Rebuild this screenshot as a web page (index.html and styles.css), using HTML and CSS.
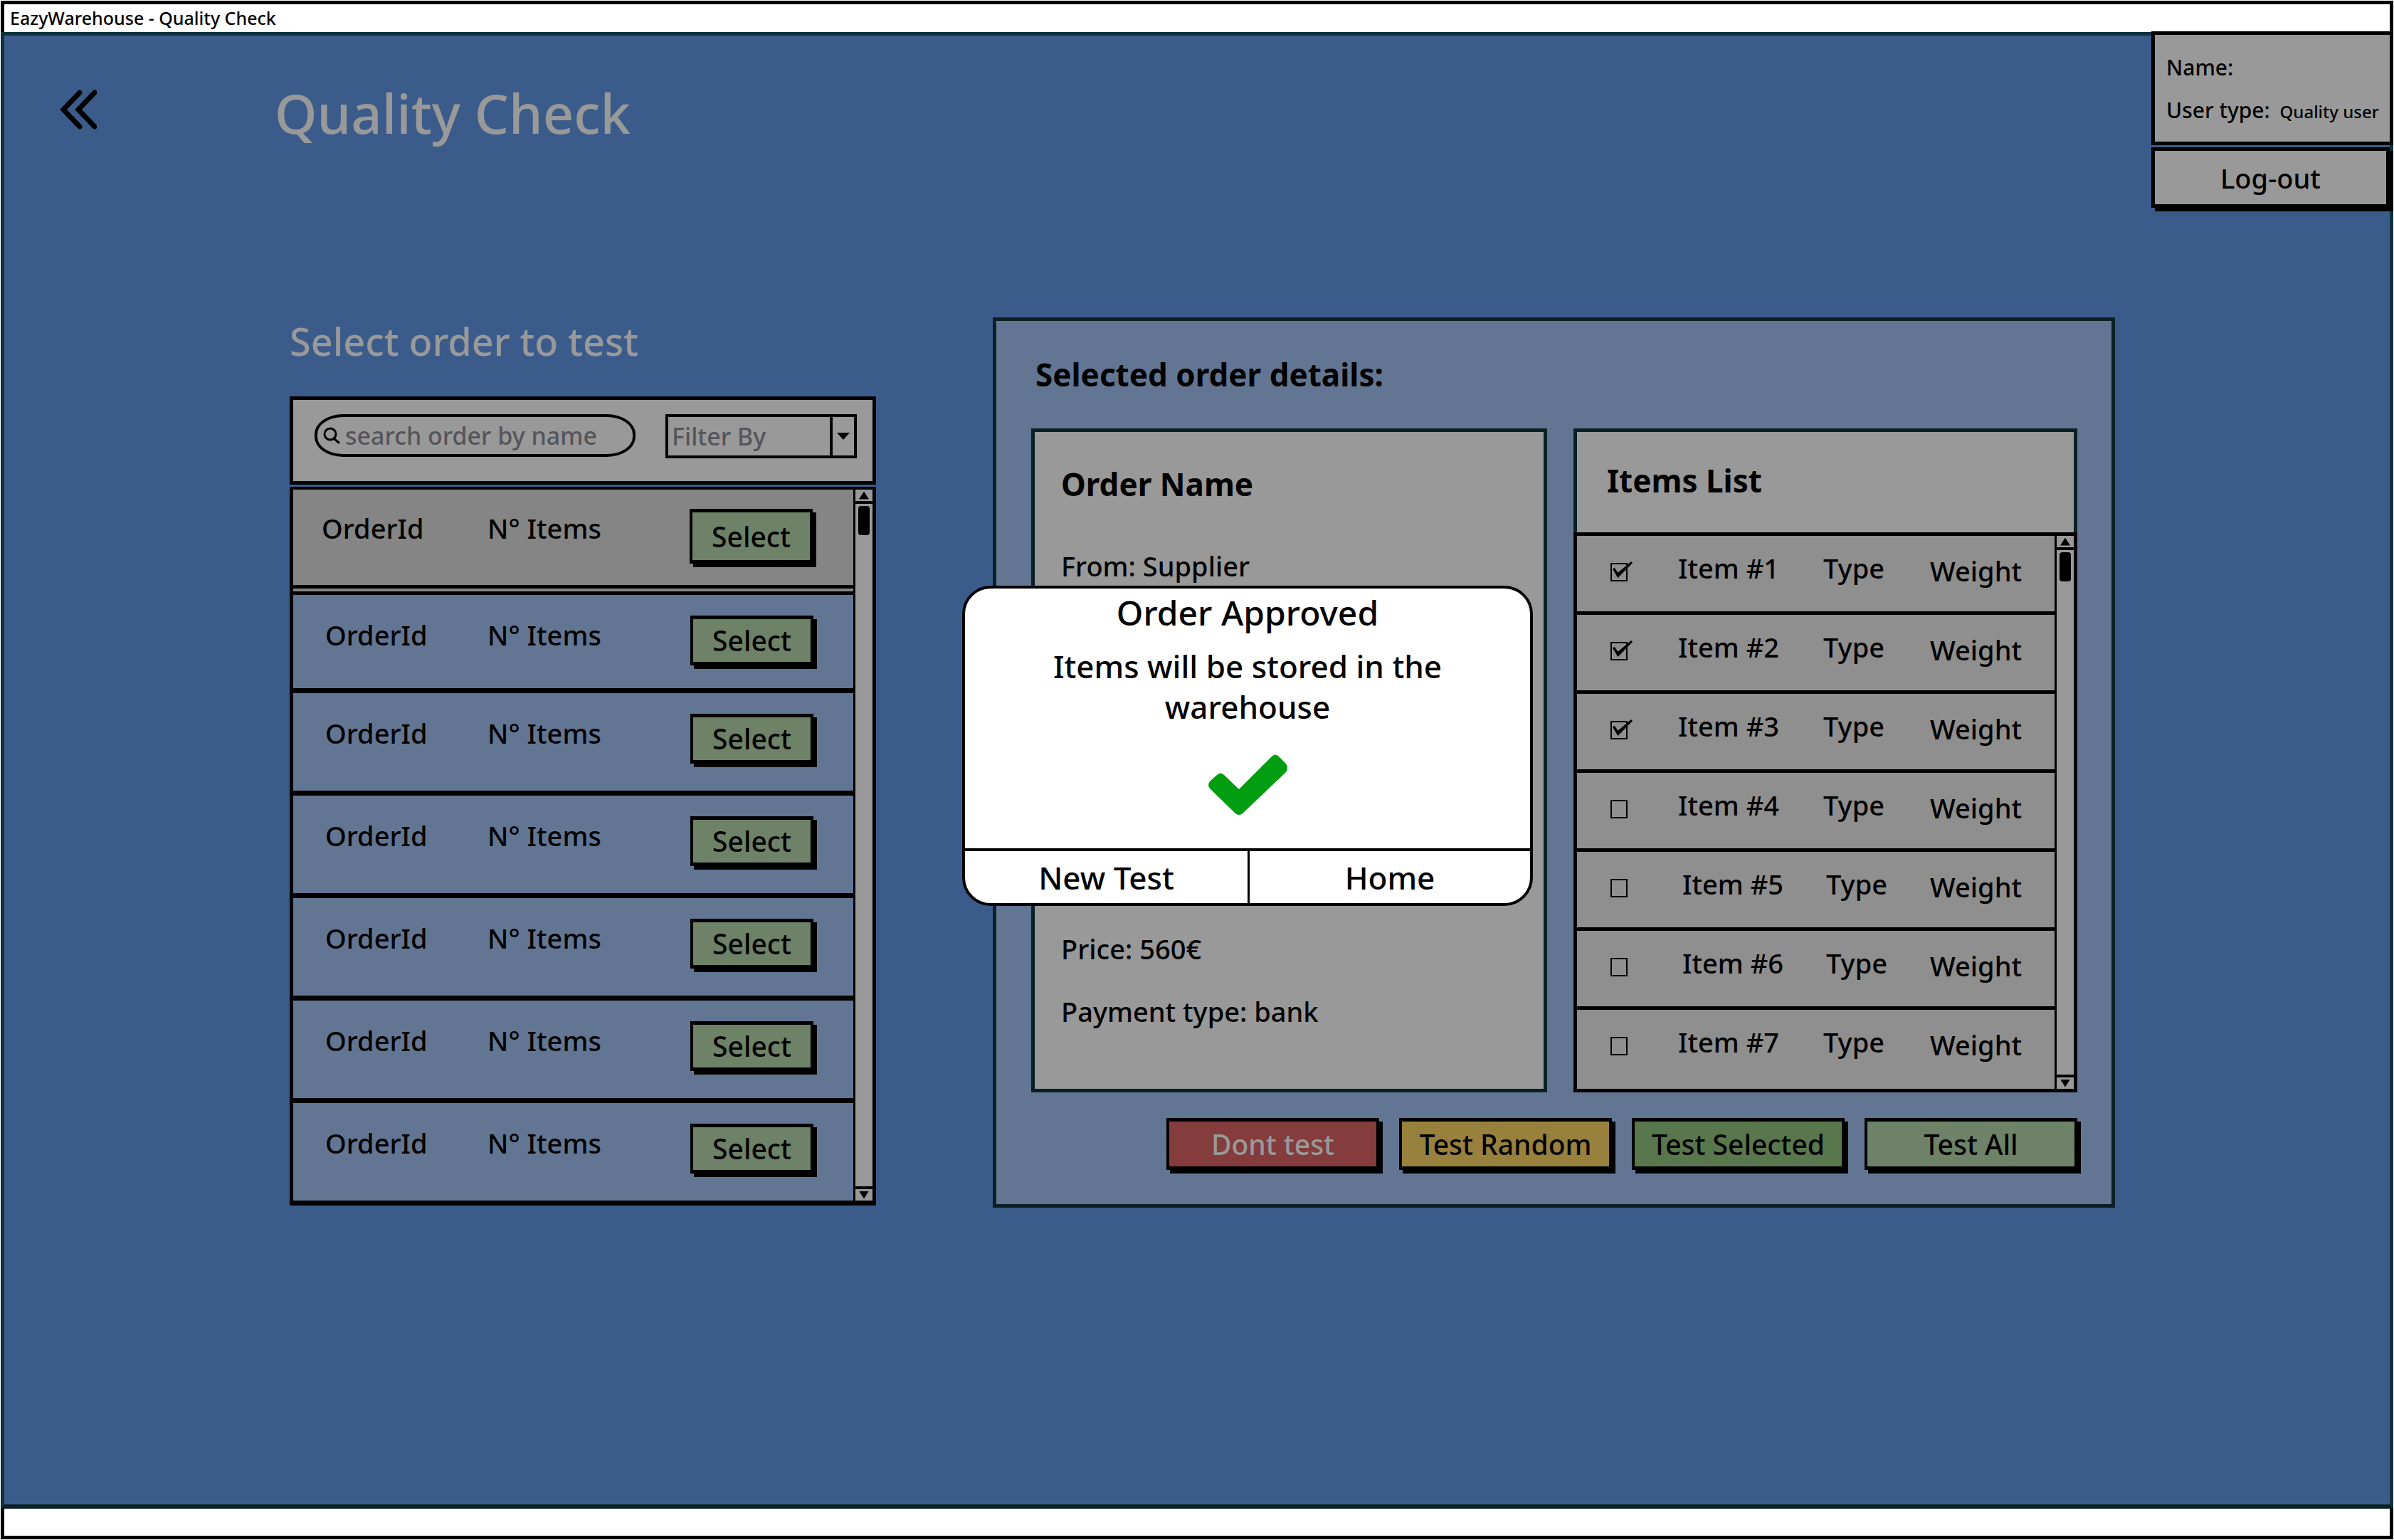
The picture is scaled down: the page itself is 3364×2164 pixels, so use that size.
FILE: index.html
```html
<!DOCTYPE html>
<html lang="en">
<head>
<meta charset="utf-8">
<title>EazyWarehouse - Quality Check</title>
<link rel="stylesheet" href="styles.css">
</head>
<body>
<div class="window">
  <div class="titlebar">EazyWarehouse - Quality Check</div>

  <div class="screen">
    <header class="page-header">
      <a class="back" href="#" aria-label="Back">
        <svg class="back-icon" viewBox="0 0 52 56" aria-hidden="true">
          <path d="M28 4 L5 28 L28 52 M49 4 L26 28 L49 52"/>
        </svg>
      </a>
      <h1 class="page-title">Quality Check</h1>
      <div class="account">
        <div class="account-card">
          <p class="account-line">Name:</p>
          <p class="account-line">User type: <span class="account-value">Quality user</span></p>
        </div>
        <button class="logout" type="button">Log-out</button>
      </div>
    </header>

    <main class="workspace">
      <section class="orders">
        <h2 class="orders-title">Select order to test</h2>
        <div class="orders-tools">
          <label class="search">
            <svg class="search-icon" viewBox="0 0 24 24" aria-hidden="true">
              <circle cx="10" cy="10" r="8"/>
              <path d="M15 16 L22 22"/>
            </svg>
            <input class="search-input" type="search" placeholder="search order by name" aria-label="search order by name">
          </label>
          <div class="filter">
            <select class="filter-select" aria-label="Filter By">
              <option>Filter By</option>
            </select>
            <span class="filter-arrow"></span>
          </div>
        </div>
        <div class="orders-list">
          <table class="orders-table">
            <tbody>
              <tr class="order order-selected"><td>OrderId</td><td>N° Items</td><td><button class="btn btn-select" type="button">Select</button></td></tr>
              <tr class="order"><td>OrderId</td><td>N° Items</td><td><button class="btn btn-select" type="button">Select</button></td></tr>
              <tr class="order"><td>OrderId</td><td>N° Items</td><td><button class="btn btn-select" type="button">Select</button></td></tr>
              <tr class="order"><td>OrderId</td><td>N° Items</td><td><button class="btn btn-select" type="button">Select</button></td></tr>
              <tr class="order"><td>OrderId</td><td>N° Items</td><td><button class="btn btn-select" type="button">Select</button></td></tr>
              <tr class="order"><td>OrderId</td><td>N° Items</td><td><button class="btn btn-select" type="button">Select</button></td></tr>
              <tr class="order"><td>OrderId</td><td>N° Items</td><td><button class="btn btn-select" type="button">Select</button></td></tr>
            </tbody>
          </table>
          <div class="scrollbar" aria-hidden="true">
            <span class="scroll-end scroll-up"></span>
            <span class="scroll-track"><span class="scroll-thumb"></span></span>
            <span class="scroll-end scroll-down"></span>
          </div>
        </div>
      </section>

      <section class="details">
        <h2 class="details-title">Selected order details:</h2>
        <div class="details-cards">
          <article class="order-card">
            <h3 class="card-title">Order Name</h3>
            <p class="order-line order-from">From: Supplier</p>
            <p class="order-line">Price: 560€</p>
            <p class="order-line">Payment type: bank</p>
          </article>
          <article class="items-card">
            <div class="items-head"><h3 class="card-title">Items List</h3></div>
            <div class="items-list">
              <table class="items-table">
                <tbody>
                  <tr class="item"><td class="item-low"><input class="check" type="checkbox" aria-label="Item #1" checked></td><td>Item #1</td><td>Type</td><td class="item-low">Weight</td></tr>
                  <tr class="item"><td class="item-low"><input class="check" type="checkbox" aria-label="Item #2" checked></td><td>Item #2</td><td>Type</td><td class="item-low">Weight</td></tr>
                  <tr class="item"><td class="item-low"><input class="check" type="checkbox" aria-label="Item #3" checked></td><td>Item #3</td><td>Type</td><td class="item-low">Weight</td></tr>
                  <tr class="item"><td class="item-low"><input class="check" type="checkbox" aria-label="Item #4"></td><td>Item #4</td><td>Type</td><td class="item-low">Weight</td></tr>
                  <tr class="item item-inset"><td class="item-low"><input class="check" type="checkbox" aria-label="Item #5"></td><td>Item #5</td><td>Type</td><td class="item-low">Weight</td></tr>
                  <tr class="item item-inset"><td class="item-low"><input class="check" type="checkbox" aria-label="Item #6"></td><td>Item #6</td><td>Type</td><td class="item-low">Weight</td></tr>
                  <tr class="item"><td class="item-low"><input class="check" type="checkbox" aria-label="Item #7"></td><td>Item #7</td><td>Type</td><td class="item-low">Weight</td></tr>
                </tbody>
              </table>
              <div class="scrollbar" aria-hidden="true">
                <span class="scroll-end scroll-up"></span>
                <span class="scroll-track"><span class="scroll-thumb"></span></span>
                <span class="scroll-end scroll-down"></span>
              </div>
            </div>
          </article>
        </div>
        <div class="actions">
          <button class="btn btn-action btn-red" type="button">Dont test</button>
          <button class="btn btn-action btn-yellow" type="button">Test Random</button>
          <button class="btn btn-action btn-green" type="button">Test Selected</button>
          <button class="btn btn-action" type="button">Test All</button>
        </div>
      </section>
    </main>
  </div>

  <div class="statusbar"></div>
</div>

<div class="overlay">
  <div class="dialog" role="dialog" aria-labelledby="dialog-title">
    <h2 class="dialog-title" id="dialog-title">Order Approved</h2>
    <p class="dialog-text">Items will be stored in the warehouse</p>
    <svg class="dialog-icon" viewBox="0 0 111 85" aria-hidden="true">
      <path d="M3 37 L12 29 Q17 24 22 29 L43 49 L89 3 Q94 -2 99 3 L108 12 Q114 19 108 26 L48 83 Q43 87 38 83 L3 49 Q-3 43 3 37 Z"/>
    </svg>
    <div class="dialog-actions">
      <button class="dialog-button" type="button">New Test</button>
      <button class="dialog-button" type="button">Home</button>
    </div>
  </div>
</div>
</body>
</html>
```
FILE: styles.css
```css
:root {
  --ink: #000;
  --teal: #0a2025;
  --frame: #0d323c;
  --blue: #3b5c8b;
  --panel: #627694;
  --grey: #999;
  --row: #8f8f8f;
  --row-selected: #858585;
  --sage: #6d8266;
}

* {
  box-sizing: border-box;
}

body {
  margin: 0;
  padding: 1px;
  background: #fff;
  color: var(--ink);
  font-family: "Noto Sans", "Open Sans", sans-serif;
  font-size: 38px;
  font-weight: 500;
  line-height: 50px;
  position: relative;
}

h1, h2, h3, p {
  margin: 0;
  font-weight: 500;
}

button, input, select {
  margin: 0;
  padding: 0;
  border-radius: 0;
  color: inherit;
  font: inherit;
}

button {
  cursor: pointer;
}

/* Window frame */

.window {
  display: flex;
  flex-direction: column;
  min-height: calc(100vh - 2px);
}

.titlebar {
  padding: 0 8px;
  border: 5px solid var(--ink);
  border-bottom: 0;
  font-size: 25px;
  line-height: 39px;
}

.screen {
  flex: 1;
  border: 5px solid var(--frame);
  border-bottom: 6px solid var(--teal);
  background: var(--blue);
}

.statusbar {
  height: 43px;
  border: 5px solid var(--ink);
  border-top: 0;
}

/* Header */

.page-header {
  display: flex;
  align-items: flex-start;
}

.back {
  margin: 76px 0 0 78px;
}

.back-icon {
  display: block;
  width: 52px;
  height: 56px;
  fill: none;
  stroke: var(--ink);
  stroke-width: 7;
  stroke-linecap: round;
}

.page-title {
  margin: 59px auto 0 250px;
  color: var(--grey);
  font-size: 76px;
  line-height: 100px;
}

.account {
  width: 340px;
  margin: -6px -5px 0 0;
}

.account-card {
  height: 160px;
  padding: 16px 0 0 16px;
  border: 5px solid var(--ink);
  background: var(--grey);
}

.account-line {
  height: 60px;
  font-size: 30px;
  line-height: 60px;
  white-space: nowrap;
}

.account-value {
  margin-left: 6px;
  font-size: 24px;
}

.logout {
  display: block;
  width: 335px;
  height: 85px;
  margin-top: 3px;
  border: 5px solid var(--ink);
  background: var(--grey);
  box-shadow: 5px 5px 0 var(--ink);
}

/* Two-column work area */

.workspace {
  display: grid;
  grid-template-columns: 401fr 824fr 164fr 1577fr 386fr;
  align-items: start;
  margin-top: 154px;
}

.orders {
  grid-column: 2;
}

.orders-title {
  margin-bottom: 45px;
  color: var(--grey);
  font-size: 54px;
  line-height: 66px;
}

.orders-tools {
  display: flex;
  justify-content: space-between;
  margin-bottom: 3px;
  padding: 20px 22px 32px 30px;
  border: 5px solid var(--ink);
  background: var(--grey);
}

.search {
  display: flex;
  align-items: center;
  width: 451px;
  height: 60px;
  padding: 0 20px 0 8px;
  border: 4px solid var(--ink);
  border-radius: 40px / 28px;
}

.search-icon {
  flex: none;
  width: 24px;
  height: 24px;
  fill: none;
  stroke: var(--ink);
  stroke-width: 3;
  stroke-linecap: round;
}

.search-input {
  flex: 1;
  min-width: 0;
  margin-left: 7px;
  border: 0;
  background: none;
  font-size: 34px;
  line-height: 50px;
  outline: 0;
  appearance: none;
}

.search-input::placeholder {
  color: #55555c;
  opacity: 1;
}

.filter {
  display: flex;
  width: 269px;
  height: 62px;
  border: 4px solid var(--ink);
}

.filter-select {
  flex: 1;
  padding-left: 5px;
  border: 0;
  background: none;
  color: #55555c;
  font-size: 34px;
  appearance: none;
}

.filter-arrow {
  display: grid;
  place-items: center;
  width: 34px;
  border-left: 4px solid var(--ink);
}

.filter-arrow::after {
  content: "";
  width: 18px;
  height: 10px;
  background: var(--ink);
  clip-path: polygon(0 0, 100% 0, 50% 100%);
}

.orders-list {
  display: flex;
  border: 5px solid var(--ink);
  border-width: 4px 5px 7px;
  background: var(--panel);
}

.orders-table, .items-table {
  display: block;
  flex: 1;
}

.orders-table tbody, .items-table tbody {
  display: block;
}

td {
  padding: 0;
}

.order {
  display: grid;
  grid-template-columns: 228px 285px 1fr;
  align-items: start;
  height: 144px;
  padding: 29px 0 0 45px;
  border-bottom: 7px solid var(--ink);
  line-height: 54px;
}

.order:last-child {
  height: 137px;
  border-bottom: 0;
}

.order-selected {
  grid-template-columns: 233px 284px 1fr;
  height: 148px;
  padding: 27px 0 0 40px;
  border-bottom: 14px double var(--ink);
  background: var(--row-selected);
}

.order-selected + .order {
  height: 138px;
}

/* Buttons with a hard shadow */

.btn {
  display: block;
  border: 5px solid var(--ink);
  border-width: 5px 4px;
  background: var(--sage);
  box-shadow: 5px 5px 0 var(--ink);
  font-size: 39px;
}

.btn-select {
  width: 173px;
  height: 70px;
  line-height: 54px;
}

.order-selected .btn-select {
  height: 77px;
}

/* Scrollbar */

.scrollbar {
  display: flex;
  flex-direction: column;
  flex: none;
  width: 27px;
  border-left: 3px solid var(--ink);
  background: var(--grey);
}

.scroll-end {
  display: grid;
  place-items: center;
  height: 16px;
}

.scroll-end::after {
  content: "";
  width: 14px;
  height: 11px;
  background: var(--ink);
}

.scroll-up::after {
  clip-path: polygon(50% 0, 100% 100%, 0 100%);
}

.scroll-down::after {
  clip-path: polygon(0 0, 100% 0, 50% 100%);
}

.scroll-track {
  display: flex;
  flex: 1;
  justify-content: center;
  padding-top: 3px;
  border: solid var(--ink);
  border-width: 4px 0;
}

.scroll-thumb {
  width: 16px;
  height: 41px;
  border-radius: 4px;
  background: var(--ink);
}

/* Selected order */

.details {
  grid-column: 4;
  padding: 45px 48px 48px 49px;
  border: 5px solid var(--teal);
  background: var(--panel);
}

.details-title {
  margin-bottom: 46px;
  padding-left: 6px;
  font-size: 44px;
  font-weight: 700;
  line-height: 60px;
}

.details-cards {
  display: grid;
  grid-template-columns: 725fr 708fr;
  gap: 37px;
}

.card-title {
  font-size: 44px;
  font-weight: 700;
  line-height: 60px;
}

.order-card {
  padding: 43px 37px;
  border: 5px solid var(--teal);
  background: var(--grey);
}

.order-line {
  margin-top: 38px;
}

.order-from {
  margin: 60px 0 488px;
}

.items-head {
  height: 146px;
  padding: 38px 42px 0;
  border: 5px solid var(--teal);
  border-bottom: 0;
  background: var(--grey);
}

.items-list {
  display: flex;
  border: 5px solid var(--ink);
  background: var(--row);
}

.item {
  display: grid;
  grid-template-columns: 95px 204px 150px 1fr;
  align-items: start;
  height: 111px;
  padding: 20px 0 0 47px;
  border-bottom: 5px solid var(--ink);
}

.item:last-child {
  border-bottom: 0;
}

.item-inset {
  grid-template-columns: 101px 202px 146px 1fr;
}

.item-low {
  padding-top: 4px;
}

.check {
  display: block;
  width: 24px;
  height: 26px;
  margin-top: 14px;
  border: 2px solid var(--ink);
  appearance: none;
}

.check:checked::before {
  content: "";
  display: block;
  width: 30px;
  height: 24px;
  margin-top: -4px;
  background: var(--ink);
  clip-path: polygon(3% 44%, 13% 38%, 28% 66%, 90% 0, 97% 8%, 28% 96%);
}

.actions {
  display: flex;
  justify-content: flex-end;
  gap: 28px;
  margin-top: 36px;
}

.btn-action {
  width: 299px;
  height: 73px;
}

.btn-red {
  background: #843c3c;
  color: var(--grey);
}

.btn-yellow {
  background: #98813d;
}

.btn-green {
  background: #59774c;
}

/* Confirmation dialog */

.overlay {
  position: absolute;
  inset: 0;
  display: grid;
  grid-template-columns: 1352fr 802fr 1210fr;
  align-items: start;
  padding-top: 823px;
}

.dialog {
  display: flex;
  flex-direction: column;
  align-items: center;
  grid-column: 2;
  padding-top: 4px;
  border: 4px solid var(--ink);
  border-radius: 40px;
  background: #fff;
}

.dialog-title {
  font-size: 48px;
  line-height: 60px;
}

.dialog-text {
  max-width: 620px;
  margin: 17px 0 38px;
  font-size: 44px;
  line-height: 57px;
  text-align: center;
}

.dialog-icon {
  width: 111px;
  height: 85px;
  fill: #029d11;
}

.dialog-actions {
  display: grid;
  grid-template-columns: 1fr 1fr;
  align-self: stretch;
  margin-top: 47px;
  border-top: 4px solid var(--ink);
}

.dialog-button {
  height: 73px;
  border: 0;
  background: none;
  font-size: 44px;
  line-height: 60px;
}

.dialog-button + .dialog-button {
  border-left: 3px solid var(--ink);
}
```
